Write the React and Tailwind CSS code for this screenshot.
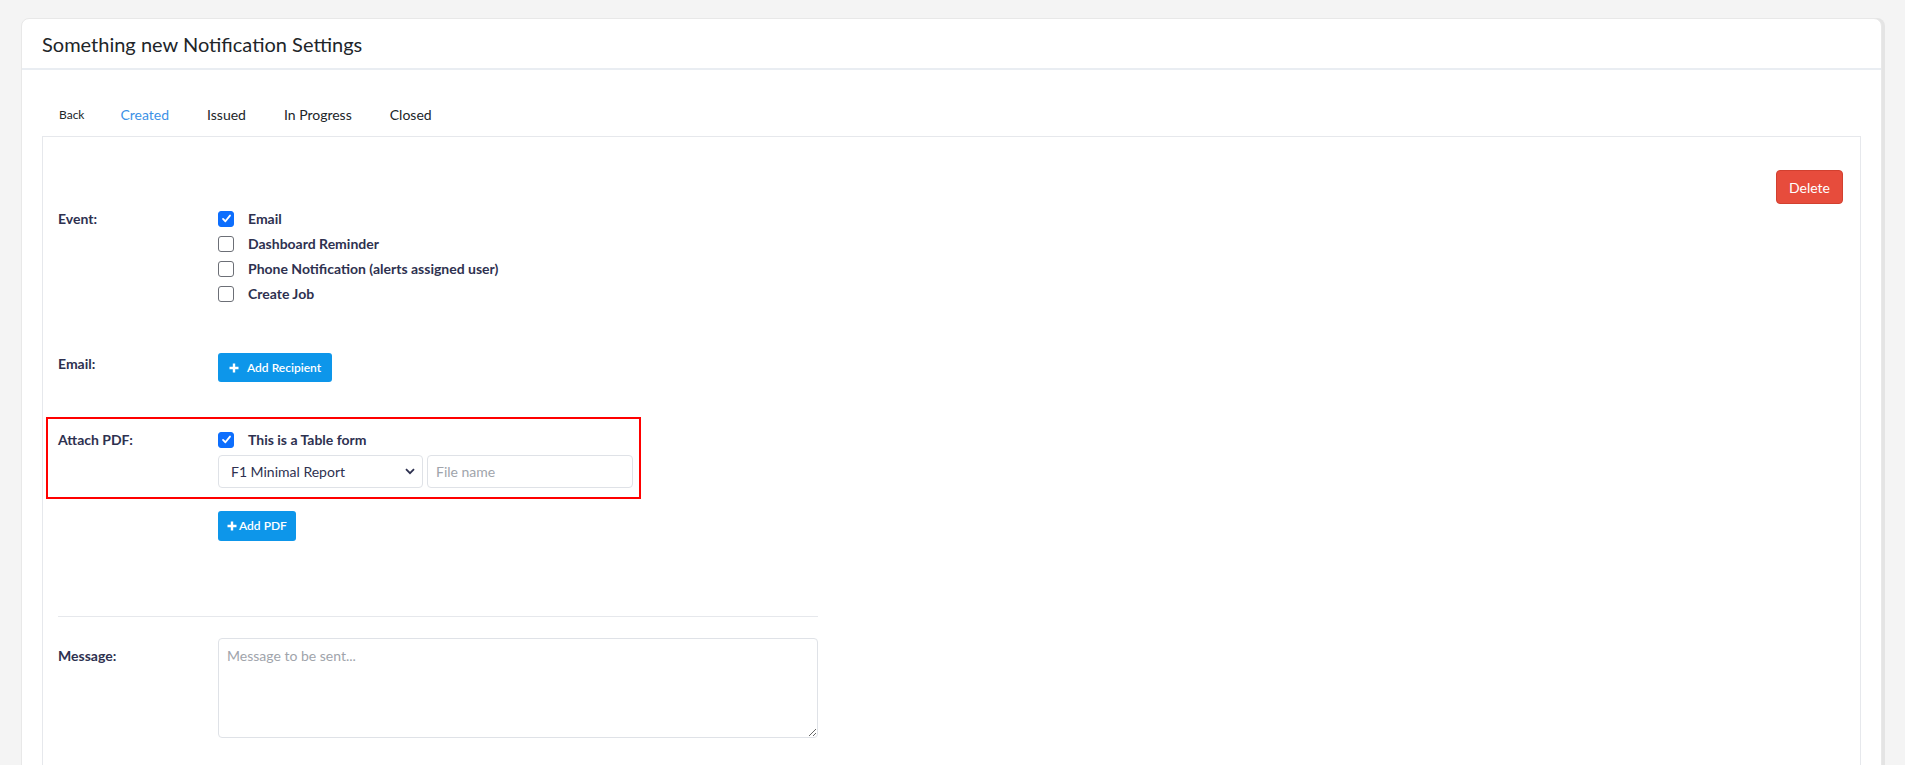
import React, { useState } from "react";

function Checkbox({ checked, onChange }) {
  return (
    <button
      type="button"
      onClick={onChange}
      className={
        checked
          ? "w-[16px] h-[16px] rounded-[3px] bg-[#0d6efd] border border-[#0d6efd] flex items-center justify-center shrink-0"
          : "w-[16px] h-[16px] rounded-[3px] bg-white border border-[#6c6f76] shrink-0"
      }
    >
      {checked && (
        <svg width="11" height="11" viewBox="0 0 12 12" fill="none">
          <path
            d="M2.2 6.4 L4.8 9 L9.8 2.8"
            stroke="white"
            strokeWidth="2"
            strokeLinecap="round"
            strokeLinejoin="round"
          />
        </svg>
      )}
    </button>
  );
}

function CheckRow({ label, checked, onChange }) {
  return (
    <div className="flex items-center h-[25px]">
      <Checkbox checked={checked} onChange={onChange} />
      <span className="ml-[14px] text-[14px] font-bold text-[#2e3150]">{label}</span>
    </div>
  );
}

function Plus() {
  return (
    <svg width="10" height="10" viewBox="0 0 10 10">
      <path d="M5 0.5 V9.5 M0.5 5 H9.5" stroke="white" strokeWidth="2.4" />
    </svg>
  );
}

export default function App() {
  const [events, setEvents] = useState({
    email: true,
    dashboard: false,
    phone: false,
    job: false,
  });
  const [tableForm, setTableForm] = useState(true);
  const [report, setReport] = useState("F1 Minimal Report");
  const [fileName, setFileName] = useState("");
  const [message, setMessage] = useState("");
  const tabs = ["Created", "Issued", "In Progress", "Closed"];

  function toggle(key) {
    setEvents({ ...events, [key]: !events[key] });
  }

  return (
    <div
      className="min-h-screen bg-[#f4f4f4] pt-[18px] pl-[21px] pr-[23px]"
      style={{ fontFamily: "Lato, 'Noto Sans', sans-serif" }}
    >
      <div className="bg-white rounded-t-[8px] border border-[#e8e8e8] shadow-[3px_0_0_#e4e4e4] min-h-[760px]">
        <div className="h-[51px] flex items-center px-[20px] border-b-2 border-[#e9edf2]">
          <h1 className="text-[20px] text-[#212529]">Something new Notification Settings</h1>
        </div>

        <div className="pt-[23px] px-[20px]">
          <nav className="flex items-center h-[43px]">
            <a className="px-[17px] text-[12px] text-[#212529] cursor-pointer">Back</a>
            {tabs.map((t, i) => (
              <a
                key={t}
                className={
                  i === 0
                    ? "px-[19px] text-[14px] text-[#3c91e6] cursor-pointer"
                    : "px-[19px] text-[14px] text-[#212529] cursor-pointer"
                }
              >
                {t}
              </a>
            ))}
          </nav>

          <div className="border border-[#e6e8ec] pt-[33px] px-[15px] pb-[40px]">
            <div className="flex justify-end pr-[2px]">
              <button className="h-[34px] w-[67px] rounded-[4px] bg-[#e74c3c] border border-[#d2402f] text-white text-[14px]">
                Delete
              </button>
            </div>

            <div className="w-[760px]">
              <div className="flex mt-[2px]">
                <div className="w-[160px] h-[25px] flex items-center text-[14px] font-bold text-[#2e3150]">
                  Event:
                </div>
                <div className="flex flex-col">
                  <CheckRow label="Email" checked={events.email} onChange={() => toggle("email")} />
                  <CheckRow label="Dashboard Reminder" checked={events.dashboard} onChange={() => toggle("dashboard")} />
                  <CheckRow label="Phone Notification (alerts assigned user)" checked={events.phone} onChange={() => toggle("phone")} />
                  <CheckRow label="Create Job" checked={events.job} onChange={() => toggle("job")} />
                </div>
              </div>

              <div className="flex mt-[47px]">
                <div className="w-[160px] text-[14px] font-bold text-[#2e3150]">Email:</div>
                <button className="h-[29px] px-[11px] rounded-[3px] bg-[#0d96ea] text-white text-[12px] font-semibold flex items-center gap-[8px]">
                  <Plus />
                  Add Recipient
                </button>
              </div>

              <div className="mt-[35px] -ml-[12px] w-[595px] border-2 border-[#ff0000] pl-[10px] pt-[8px] pb-[9px] flex">
                <div className="w-[160px] h-[25px] flex items-center text-[14px] font-bold text-[#2e3150]">
                  Attach PDF:
                </div>
                <div className="flex flex-col">
                  <CheckRow label="This is a Table form" checked={tableForm} onChange={() => setTableForm(!tableForm)} />
                  <div className="flex gap-[4px] mt-[3px]">
                    <div className="relative w-[205px]">
                      <select
                        value={report}
                        onChange={(e) => setReport(e.target.value)}
                        className="appearance-none w-full h-[33px] border border-[#dfe2e7] rounded-[4px] pl-[12px] text-[14px] text-[#2e3150] bg-white outline-none"
                      >
                        <option>F1 Minimal Report</option>
                        <option>F2 Full Report</option>
                      </select>
                      <svg
                        className="absolute right-[8px] top-[13px] pointer-events-none"
                        width="10"
                        height="7"
                        viewBox="0 0 10 7"
                      >
                        <path d="M1 1.2 L5 5.2 L9 1.2" stroke="#2e3150" strokeWidth="1.8" fill="none" />
                      </svg>
                    </div>
                    <input
                      value={fileName}
                      onChange={(e) => setFileName(e.target.value)}
                      placeholder="File name"
                      className="w-[206px] h-[33px] border border-[#dfe2e7] rounded-[4px] px-[8px] text-[14px] text-[#2e3150] placeholder:text-[#a0a4ab] outline-none"
                    />
                  </div>
                </div>
              </div>

              <div className="pl-[160px] mt-[12px]">
                <button className="h-[30px] px-[9px] rounded-[3px] bg-[#0d96ea] text-white text-[12px] font-semibold flex items-center gap-[2px]">
                  <Plus />
                  Add PDF
                </button>
              </div>

              <div className="mt-[75px] border-t border-[#e6e8ec]"></div>

              <div className="flex mt-[21px]">
                <div className="w-[160px] pt-[7px] text-[14px] font-bold text-[#2e3150]">Message:</div>
                <textarea
                  value={message}
                  onChange={(e) => setMessage(e.target.value)}
                  placeholder="Message to be sent..."
                  className="w-[600px] h-[100px] border border-[#dfe2e7] rounded-[4px] px-[8px] py-[6px] text-[14px] text-[#2e3150] placeholder:text-[#a0a4ab] outline-none"
                />
              </div>
            </div>
          </div>
        </div>
      </div>
    </div>
  );
}
